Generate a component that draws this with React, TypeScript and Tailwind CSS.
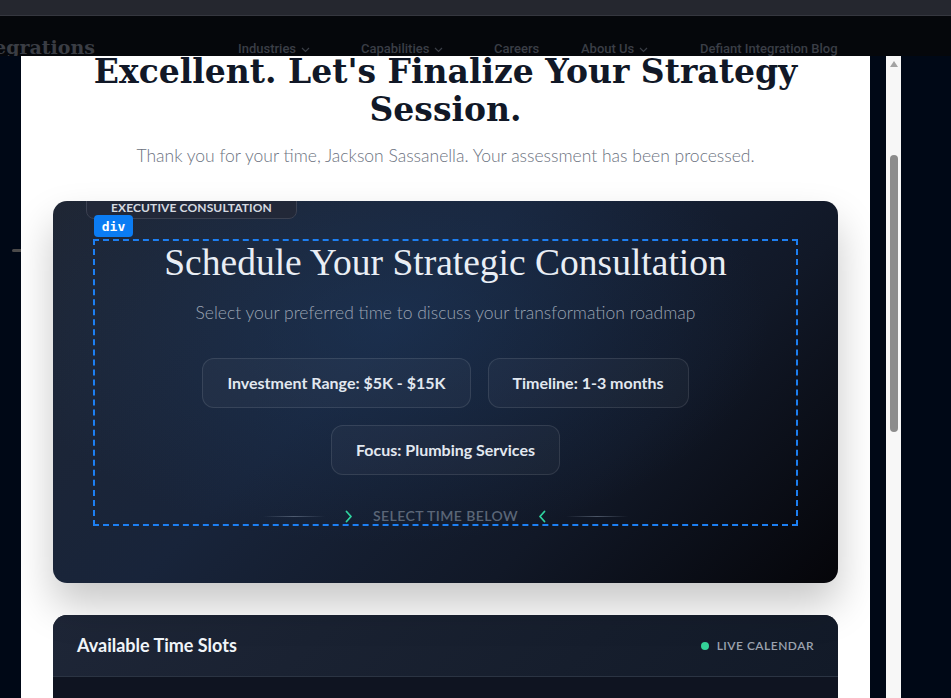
import React from "react";

const serif = "font-['Liberation_Serif','Times_New_Roman',serif]";
const wideSerif = "font-['DejaVu_Serif','Liberation_Serif',serif]";
const sans = "font-['Lato','Liberation_Sans',sans-serif]";

const navItems = [
  { label: "Industries", caret: true, w: "w-[80px]", ml: "ml-[143px]" },
  { label: "Capabilities", caret: true, w: "w-[89px]", ml: "ml-[43px]" },
  { label: "Careers", caret: false, w: "w-[47px]", ml: "ml-[44px]" },
  { label: "About Us", caret: true, w: "w-[76px]", ml: "ml-[40px]" },
  { label: "Defiant Integration Blog", caret: false, w: "w-[154px]", ml: "ml-[43px]" },
];

const chips = ["Investment Range: $5K - $15K", "Timeline: 1-3 months", "Focus: Plumbing Services"];

const Caret = () => (
  <svg width="9" height="6" viewBox="0 0 9 6" fill="none" className="ml-[5px] mt-[2px]">
    <path d="M1 1l3.5 3.5L8 1" stroke="#3a3e46" strokeWidth="1.2" />
  </svg>
);

const Chevron: React.FC<{ dir: "right" | "left" }> = ({ dir }) => (
  <svg width="8" height="13" viewBox="0 0 8 13" fill="none">
    <path
      d={dir === "right" ? "M1.5 1.5L6 6.5l-4.5 5" : "M6.5 1.5L2 6.5l4.5 5"}
      stroke="#2fd39f"
      strokeWidth="1.8"
      strokeLinecap="round"
      strokeLinejoin="round"
    />
  </svg>
);

const App: React.FC = () => {
  return (
    <div className="w-[951px] h-[698px] overflow-hidden flex flex-col bg-[#000816]">
      {/* browser chrome */}
      <div className="h-[16px] shrink-0 bg-[#25272f] border-b border-[#35373f]" />

      {/* site nav behind the modal */}
      <div className="h-[40px] shrink-0 bg-[#05070b] flex items-start pt-[25px] overflow-hidden">
        <div className="w-[95px] shrink-0 flex justify-end overflow-hidden -mt-[6px]">
          <span className={`${wideSerif} whitespace-nowrap text-[19px] leading-[24px] font-bold text-[#3a3d44]`}>
            Defiant Integrations
          </span>
        </div>
        {navItems.map((item) => (
          <div
            key={item.label}
            className={`${item.w} ${item.ml} shrink-0 flex items-center whitespace-nowrap font-['Roboto',sans-serif] font-medium text-[13px] leading-[16px] text-[#3a3e46]`}
          >
            {item.label}
            {item.caret && <Caret />}
          </div>
        ))}
      </div>

      <div className="flex-1 flex min-h-0">
        {/* left page strip */}
        <div className="w-[21px] shrink-0 bg-[#000816] pt-[193px] pl-[12px]">
          <div className="w-[9px] h-[3px] bg-[#4b4a4a] rounded-l-sm" />
        </div>

        {/* modal */}
        <div className="w-[849px] shrink-0 bg-white overflow-hidden px-8">
          <h1
            className={`${wideSerif} -mt-[3px] text-center text-[33px] leading-[38px] font-bold text-[#111827]`}
          >
            Excellent. Let's Finalize Your Strategy
            <br />
            Session.
          </h1>
          <p className={`${sans} mt-[15px] text-center text-[17.5px] leading-6 font-light text-[#6b7280]`}>
            Thank you for your time, Jackson Sassanella. Your assessment has been processed.
          </p>

          {/* consultation card */}
          <div className="relative mt-[33px] rounded-[14px] overflow-hidden pt-[38px] px-[40px] pb-[57px] shadow-[0_22px_40px_rgba(0,0,0,0.22)] bg-[image:radial-gradient(ellipse_at_42%_32%,rgba(30,60,100,0.45),transparent_60%),linear-gradient(135deg,#1f2634_0%,#18243a_40%,#111827_70%,#050509_100%)]">
            <div className="absolute -top-[12px] left-[33px] h-[30px] px-6 flex items-center rounded-[8px] border border-[#3b4151] bg-[#222838]">
              <span className={`${sans} text-[12px] leading-none font-bold tracking-[0.01em] text-[#d5d9e0] pt-[8px]`}>
                EXECUTIVE CONSULTATION
              </span>
            </div>

            <div className="relative border-2 border-dashed border-[#1d7ff2] flex flex-col items-center text-center">
              <div className="absolute -top-[26px] -left-[1px] h-[22px] w-[39px] rounded-[4px] bg-[#0b7cf3] flex items-center justify-center">
                <span className="font-['DejaVu_Sans_Mono',monospace] text-[13px] font-bold text-white leading-none">
                  div
                </span>
              </div>

              <h2 className={`${serif} text-[37.5px] leading-[44px] text-[#e9eef5]`}>
                Schedule Your Strategic Consultation
              </h2>
              <p className={`${sans} mt-4 text-[17.5px] leading-6 font-light text-[#9aa3b2]`}>
                Select your preferred time to discuss your transformation roadmap
              </p>

              <div className="mt-[33px] max-w-[600px] flex flex-wrap justify-center gap-[17px]">
                {chips.map((c) => (
                  <div
                    key={c}
                    className={`${sans} h-[50px] px-6 flex items-center rounded-xl border border-white/10 bg-white/[0.03] text-[16px] font-bold text-[#e2e8f0]`}
                  >
                    {c}
                  </div>
                ))}
              </div>

              <div className="mt-[33px] h-4 flex items-center gap-[20px]">
                <div className="w-[62px] h-px bg-[linear-gradient(90deg,transparent,rgba(148,163,184,0.45),transparent)]" />
                <Chevron dir="right" />
                <span className={`${sans} text-[14px] leading-4 font-semibold tracking-[0.03em] text-[#5b6677]`}>
                  SELECT TIME BELOW
                </span>
                <Chevron dir="left" />
                <div className="w-[62px] h-px bg-[linear-gradient(90deg,transparent,rgba(148,163,184,0.45),transparent)]" />
              </div>
            </div>
          </div>

          {/* time slots card */}
          <div className="mt-[32px] rounded-t-[14px] overflow-hidden bg-[#0f1421]">
            <div className="h-[62px] px-6 flex items-center justify-between border-b border-[#2b3443] bg-[linear-gradient(135deg,#1e2637,#121a28)]">
              <span className={`${sans} text-[18px] font-bold text-[#f1f5f9]`}>Available Time Slots</span>
              <div className="flex items-center gap-2">
                <span className="w-2 h-2 rounded-full bg-[#34d399]" />
                <span className={`${sans} text-[12px] font-semibold tracking-[0.04em] text-[#9ca3af]`}>
                  LIVE CALENDAR
                </span>
              </div>
            </div>
            <div className="h-[200px]" />
          </div>
        </div>

        <div className="w-[16px] shrink-0 bg-[#000816]" />

        {/* modal scrollbar */}
        <div className="w-[15px] shrink-0 bg-[#f7f7f7] flex flex-col items-center pt-[5px]">
          <div className="w-0 h-0 border-l-[4px] border-r-[4px] border-b-[6px] border-l-transparent border-r-transparent border-b-[#a3a3a3]" />
          <div className="mt-[88px] w-[8px] h-[277px] rounded-full bg-[#8c8c8c]" />
        </div>

        <div className="flex-1 bg-[#000816]" />
      </div>
    </div>
  );
};

export default App;
